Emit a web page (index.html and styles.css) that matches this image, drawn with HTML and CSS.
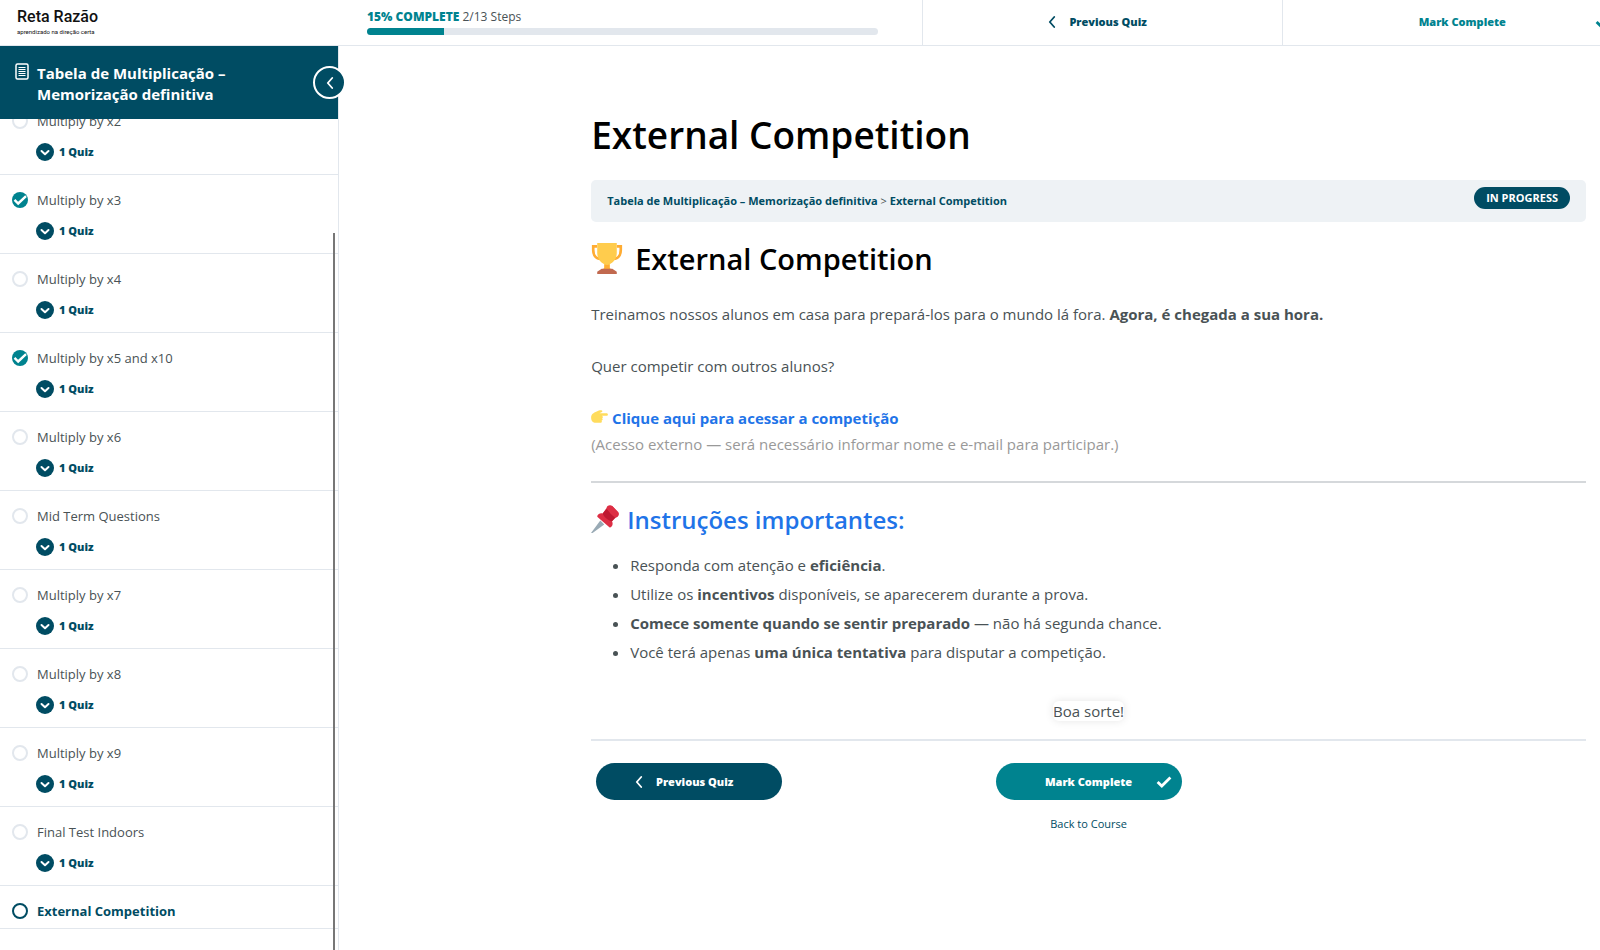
FILE: index.html
```
<!DOCTYPE html>
<html lang="pt-BR">
<head>
    <meta charset="UTF-8">
    <meta name="viewport" content="width=device-width, initial-scale=1.0">
    <title>External Competition - Reta Razão</title>
    <link rel="stylesheet" href="styles.css">
</head>
<body>
    <!-- shared icons -->
    <svg class="sprite" aria-hidden="true">
        <symbol id="icon-down" viewBox="0 0 18 18">
            <circle cx="9" cy="9" r="9" fill="#004c63"/>
            <path d="M5.500 8l3.500 3.200L12.500 8" fill="none" stroke="#fff" stroke-width="2" stroke-linecap="round" stroke-linejoin="round"/>
        </symbol>
        <symbol id="icon-done" viewBox="0 0 16 16">
            <circle cx="8" cy="8" r="8" fill="#00838f"/>
            <path d="M2.500 7.800l3.700 3.700L14 4.200" fill="none" stroke="#fff" stroke-width="2.400"/>
        </symbol>
        <symbol id="icon-left" viewBox="0 0 8 12">
            <path d="M6.200 1L1.800 6l4.400 5" fill="none" stroke="currentColor" stroke-width="1.800" stroke-linecap="round" stroke-linejoin="round"/>
        </symbol>
        <symbol id="icon-check" viewBox="0 0 16 12">
            <path d="M1.600 6l4.200 4L14.400 1.600" fill="none" stroke="currentColor" stroke-width="2.800"/>
        </symbol>
    </svg>

    <header class="topbar">
        <a class="logo" href="#">
            <span class="logo-name">Reta Razão</span>
            <span class="logo-tagline">aprendizado na direção certa</span>
        </a>
        <div class="topbar-steps">
            <div class="progress">
                <div class="progress-label"><strong>15% COMPLETE</strong> 2/13 Steps</div>
                <div class="progress-track"><div class="progress-fill" style="width: 15%"></div></div>
            </div>
            <a class="top-action" href="#"><svg class="chevron"><use href="#icon-left"/></svg>Previous Quiz</a>
            <button class="top-action top-complete" type="button">Mark Complete<svg class="check"><use href="#icon-check"/></svg></button>
        </div>
    </header>

    <div class="layout">
        <aside class="sidebar">
            <div class="course-title">
                <svg class="course-icon" viewBox="0 0 14 17">
                    <rect x="1" y="1" width="12" height="15" rx="1.500" fill="none" stroke="#fff" stroke-width="1.500"/>
                    <path d="M3.500 4.500h7M3.500 6.500h7M3.500 8.500h7M3.500 10.500h7M3.500 12.500h7" stroke="#fff"/>
                </svg>
                <a href="#">Tabela de Multiplicação – Memorização definitiva</a>
                <button class="collapse" type="button" aria-label="Collapse sidebar"><svg class="chevron"><use href="#icon-left"/></svg></button>
            </div>
            <nav class="lessons">
                <div class="lesson">
                    <a class="lesson-link" href="#"><span class="status"></span>Multiply by x2</a>
                    <button class="quiz" type="button"><svg><use href="#icon-down"/></svg>1 Quiz</button>
                </div>
                <div class="lesson">
                    <a class="lesson-link" href="#"><svg class="done"><use href="#icon-done"/></svg>Multiply by x3</a>
                    <button class="quiz" type="button"><svg><use href="#icon-down"/></svg>1 Quiz</button>
                </div>
                <div class="lesson">
                    <a class="lesson-link" href="#"><span class="status"></span>Multiply by x4</a>
                    <button class="quiz" type="button"><svg><use href="#icon-down"/></svg>1 Quiz</button>
                </div>
                <div class="lesson">
                    <a class="lesson-link" href="#"><svg class="done"><use href="#icon-done"/></svg>Multiply by x5 and x10</a>
                    <button class="quiz" type="button"><svg><use href="#icon-down"/></svg>1 Quiz</button>
                </div>
                <div class="lesson">
                    <a class="lesson-link" href="#"><span class="status"></span>Multiply by x6</a>
                    <button class="quiz" type="button"><svg><use href="#icon-down"/></svg>1 Quiz</button>
                </div>
                <div class="lesson">
                    <a class="lesson-link" href="#"><span class="status"></span>Mid Term Questions</a>
                    <button class="quiz" type="button"><svg><use href="#icon-down"/></svg>1 Quiz</button>
                </div>
                <div class="lesson">
                    <a class="lesson-link" href="#"><span class="status"></span>Multiply by x7</a>
                    <button class="quiz" type="button"><svg><use href="#icon-down"/></svg>1 Quiz</button>
                </div>
                <div class="lesson">
                    <a class="lesson-link" href="#"><span class="status"></span>Multiply by x8</a>
                    <button class="quiz" type="button"><svg><use href="#icon-down"/></svg>1 Quiz</button>
                </div>
                <div class="lesson">
                    <a class="lesson-link" href="#"><span class="status"></span>Multiply by x9</a>
                    <button class="quiz" type="button"><svg><use href="#icon-down"/></svg>1 Quiz</button>
                </div>
                <div class="lesson">
                    <a class="lesson-link" href="#"><span class="status"></span>Final Test Indoors</a>
                    <button class="quiz" type="button"><svg><use href="#icon-down"/></svg>1 Quiz</button>
                </div>
                <div class="lesson current">
                    <a class="lesson-link" href="#"><span class="status"></span>External Competition</a>
                </div>
                <div class="scroll-thumb"></div>
            </nav>
        </aside>

        <main class="content">
            <h1>External Competition</h1>
            <div class="breadcrumbs">
                <div><a href="#">Tabela de Multiplicação – Memorização definitiva</a> &gt; <a href="#">External Competition</a></div>
                <span class="badge">IN PROGRESS</span>
            </div>

            <h2>
                <svg class="trophy" viewBox="0 0 36 36">
                    <path d="M7 5H2.500v4c0 6 3 10 8.500 10M29 5h4.500v4c0 6-3 10-8.500 10" fill="none" stroke="#ffac33" stroke-width="3"/>
                    <path d="M7 1h22v11c0 7-4 11-8 13v5h-6v-5C11 23 7 19 7 12z" fill="#ffcc4d"/>
                    <path d="M15 25c2 1.200 4 1.200 6 0v4l3 3H12l3-3z" fill="#ffac33"/>
                    <path d="M12 30h12l5 3.500V36H7v-2.500z" fill="#c1694f"/>
                </svg>
                External Competition
            </h2>
            <p>Treinamos nossos alunos em casa para prepará-los para o mundo lá fora. <strong>Agora, é chegada a sua hora.</strong></p>
            <p>Quer competir com outros alunos?</p>
            <p>
                <svg class="hand" viewBox="0 0 36 30">
                    <path d="M12 3c4-2 9-3 11-2 2 1 1 3-1 4l-4 2h15c4 0 4 5.500 0 5.500H22c4 0 4 5 1 5 3 1 2 5-1 5 2 1 1 5-2 5H10C4 27.500 0 23 0 16 0 9 5 6 12 3z" fill="#ffdc5d"/>
                </svg>
                <a class="cta" href="#">Clique aqui para acessar a competição</a><br>
                <span class="note">(Acesso externo — será necessário informar nome e e-mail para participar.)</span>
            </p>

            <hr>

            <h3>
                <svg class="pin" viewBox="0 0 36 36">
                    <path d="M12 20l5 5L2 36l-2 0z" fill="#99aab5"/>
                    <path d="M20 4c0-3 4-5 7-3l8 8c2 3 0 7-3 7l-5 5c2 4 0 8-3 8L8 15c0-3 4-5 7-4z" fill="#dd2e44"/>
                    <path d="M20 5l11 11-4 5c-5-1-10-5-12-10z" fill="#be1931"/>
                    <path d="M21 4c1-3 4-4 7-2l7 8c1 3-1 6-4 6-4-2-8-6-10-12z" fill="#dd2e44"/>
                </svg>
                Instruções importantes:
            </h3>
            <ul>
                <li>Responda com atenção e <strong>eficiência</strong>.</li>
                <li>Utilize os <strong>incentivos</strong> disponíveis, se aparecerem durante a prova.</li>
                <li><strong>Comece somente quando se sentir preparado</strong> — não há segunda chance.</li>
                <li>Você terá apenas <strong>uma única tentativa</strong> para disputar a competição.</li>
            </ul>
            <div class="luck"><span>Boa sorte!</span></div>

            <div class="actions">
                <a class="btn btn-previous" href="#"><svg class="chevron"><use href="#icon-left"/></svg>Previous Quiz</a>
                <div class="actions-center">
                    <button class="btn btn-complete" type="button">Mark Complete<svg class="check"><use href="#icon-check"/></svg></button>
                    <a class="back" href="#">Back to Course</a>
                </div>
            </div>
        </main>
    </div>
</body>
</html>
```

FILE: styles.css
```
* {
    box-sizing: border-box;
}
body {
    margin: 0;
    height: 100vh;
    display: flex;
    flex-direction: column;
    overflow: hidden;
    background: #fff;
    color: #495255;
    font-family: "Open Sans", "Noto Sans", sans-serif;
    font-size: 15px;
}
a {
    color: #004c63;
    text-decoration: none;
}
button {
    padding: 0;
    border: 0;
    background: none;
    font-family: inherit;
    cursor: pointer;
}
.sprite {
    display: none;
}
.chevron {
    width: 8px;
    height: 12px;
}
.check {
    width: 16px;
    height: 12px;
}

/* top bar */
.topbar {
    display: flex;
    flex: none;
    height: 46px;
    border-bottom: 1px solid #e2e7ed;
}
.logo {
    display: flex;
    flex-direction: column;
    flex: none;
    width: 338px;
    padding: 7px 17px;
    color: #111;
    font-family: Roboto, sans-serif;
}
.logo-name {
    font-size: 16px;
    font-weight: 500;
    line-height: 20px;
}
.logo-tagline {
    font-size: 6px;
    line-height: 9px;
}
.topbar-steps {
    flex: 1;
    min-width: 0;
    display: grid;
    grid-template-columns: 46.3% 28.5% 28.5%;
    overflow: hidden;
}
.progress {
    padding: 8px 44px 0 29px;
}
.progress-label {
    font-size: 12px;
    line-height: 18px;
}
.progress-label strong {
    color: #00838f;
    font-weight: 800;
}
.progress-track {
    height: 7px;
    margin-top: 2px;
    border-radius: 4px;
    background: #e2e7ed;
    overflow: hidden;
}
.progress-fill {
    height: 100%;
    background: #00838f;
}
.top-action {
    display: flex;
    align-items: center;
    justify-content: center;
    gap: 13px;
    padding: 0 10px 2px 0;
    border-left: 1px solid #e2e7ed;
    color: #004c63;
    font-size: 11px;
    font-weight: 800;
}
.top-complete {
    position: relative;
    padding: 0 0 2px;
    color: #00838f;
}
.top-complete .check {
    position: absolute;
    right: 31px;
}

/* sidebar */
.layout {
    flex: 1;
    min-height: 0;
    display: flex;
}
.sidebar {
    display: flex;
    flex-direction: column;
    flex: none;
    width: 339px;
    border-right: 1px solid #e2e7ed;
}
.course-title {
    position: relative;
    display: flex;
    flex: none;
    gap: 8px;
    padding: 17px 80px 14px 15px;
    background: #004c63;
    font-size: 15px;
    font-weight: 700;
    line-height: 21px;
}
.course-title a {
    color: #fff;
}
.course-icon {
    flex: none;
    width: 14px;
    height: 17px;
}
.collapse {
    position: absolute;
    top: 20px;
    right: -8px;
    display: flex;
    align-items: center;
    justify-content: center;
    width: 33px;
    height: 33px;
    border: 2px solid #fff;
    border-radius: 50%;
    background: #004c63;
    color: #fff;
}
.lessons {
    position: relative;
    flex: 1;
    min-height: 0;
    display: flex;
    flex-direction: column;
    justify-content: flex-end;
    padding-bottom: 21px;
    overflow: hidden;
}
.lesson {
    flex: none;
    padding: 14px 12px 12px;
    border-bottom: 1px solid #e2e7ed;
}
.lesson-link {
    display: flex;
    align-items: center;
    gap: 9px;
    color: #495255;
    font-size: 13px;
    line-height: 22px;
}
.status {
    width: 16px;
    height: 16px;
    border: 2px solid #e2e7ed;
    border-radius: 50%;
}
.done {
    width: 16px;
    height: 16px;
}
.quiz {
    display: flex;
    align-items: center;
    gap: 5px;
    margin: 10px 0 0 24px;
    color: #004c63;
    font-size: 11px;
    font-weight: 800;
    line-height: 20px;
}
.quiz svg {
    width: 18px;
    height: 18px;
}
.current {
    padding-bottom: 6px;
}
.current .lesson-link {
    color: #004c63;
    font-weight: 700;
}
.current .status {
    border-color: #004c63;
}
.scroll-thumb {
    position: absolute;
    top: 114px;
    right: 3px;
    bottom: 0;
    width: 2px;
    background: #777;
}

/* lesson content */
.content {
    flex: 1;
    min-width: 0;
    padding: 61px 14px 0 calc((100% - 339px) * 0.2);
}
h1, h2, h3 {
    margin: 0;
    color: #000;
    font-weight: 600;
}
h1 {
    font-size: 37px;
    line-height: 56px;
}
h2 {
    display: flex;
    align-items: center;
    gap: 12px;
    margin: 16px 0 21px;
    font-size: 29px;
    line-height: 42px;
}
h3 {
    display: flex;
    align-items: center;
    gap: 8px;
    margin: 18px 0 14px;
    color: #1f74e8;
    font-size: 24px;
    line-height: 38px;
}
.trophy {
    width: 32px;
    height: 32px;
    margin-bottom: 3px;
}
.hand {
    width: 17px;
    height: 14px;
}
.pin {
    width: 28px;
    height: 28px;
    margin-bottom: 3px;
}
.breadcrumbs {
    display: flex;
    align-items: flex-start;
    justify-content: space-between;
    margin-top: 17px;
    padding: 7px 16px;
    border-radius: 5px;
    background: #eef2f5;
    font-size: 11px;
    line-height: 28px;
}
.breadcrumbs a {
    font-weight: 700;
}
.badge {
    padding: 0 12px;
    border-radius: 11px;
    background: #004c63;
    color: #fff;
    font-size: 11px;
    font-weight: 700;
    line-height: 22px;
}
p {
    margin: 0 0 26px;
    line-height: 26px;
}
.cta {
    color: #1f74e8;
    font-weight: 700;
}
.note {
    color: #999;
}
hr {
    height: 2px;
    margin: -2px 0 0;
    border: 0;
    background: #d5d8db;
}
ul {
    margin: 0;
    padding-left: 39px;
}
li {
    margin-bottom: 4px;
    line-height: 25px;
}
.luck {
    margin-top: 34px;
    padding-bottom: 15px;
    border-bottom: 2px solid #e2e7ed;
    line-height: 25px;
    text-align: center;
}
.luck span {
    border-radius: 6px;
    box-shadow: 0 0 8px rgba(0, 0, 0, 0.1);
}
.actions {
    display: grid;
    grid-template-columns: 1fr 1fr 1fr;
    align-items: start;
    padding: 22px 5px 0;
}
.actions-center {
    display: flex;
    flex-direction: column;
    align-items: center;
    gap: 13px;
}
.btn {
    position: relative;
    display: flex;
    align-items: center;
    justify-content: center;
    gap: 13px;
    width: 186px;
    height: 37px;
    border-radius: 19px;
    color: #fff;
    font-size: 11px;
    font-weight: 800;
}
.btn-previous {
    padding-right: 10px;
    background: #004c63;
}
.btn-complete {
    background: #00838f;
}
.btn-complete .check {
    position: absolute;
    right: 10px;
}
.back {
    font-size: 11px;
    line-height: 22px;
}
```
